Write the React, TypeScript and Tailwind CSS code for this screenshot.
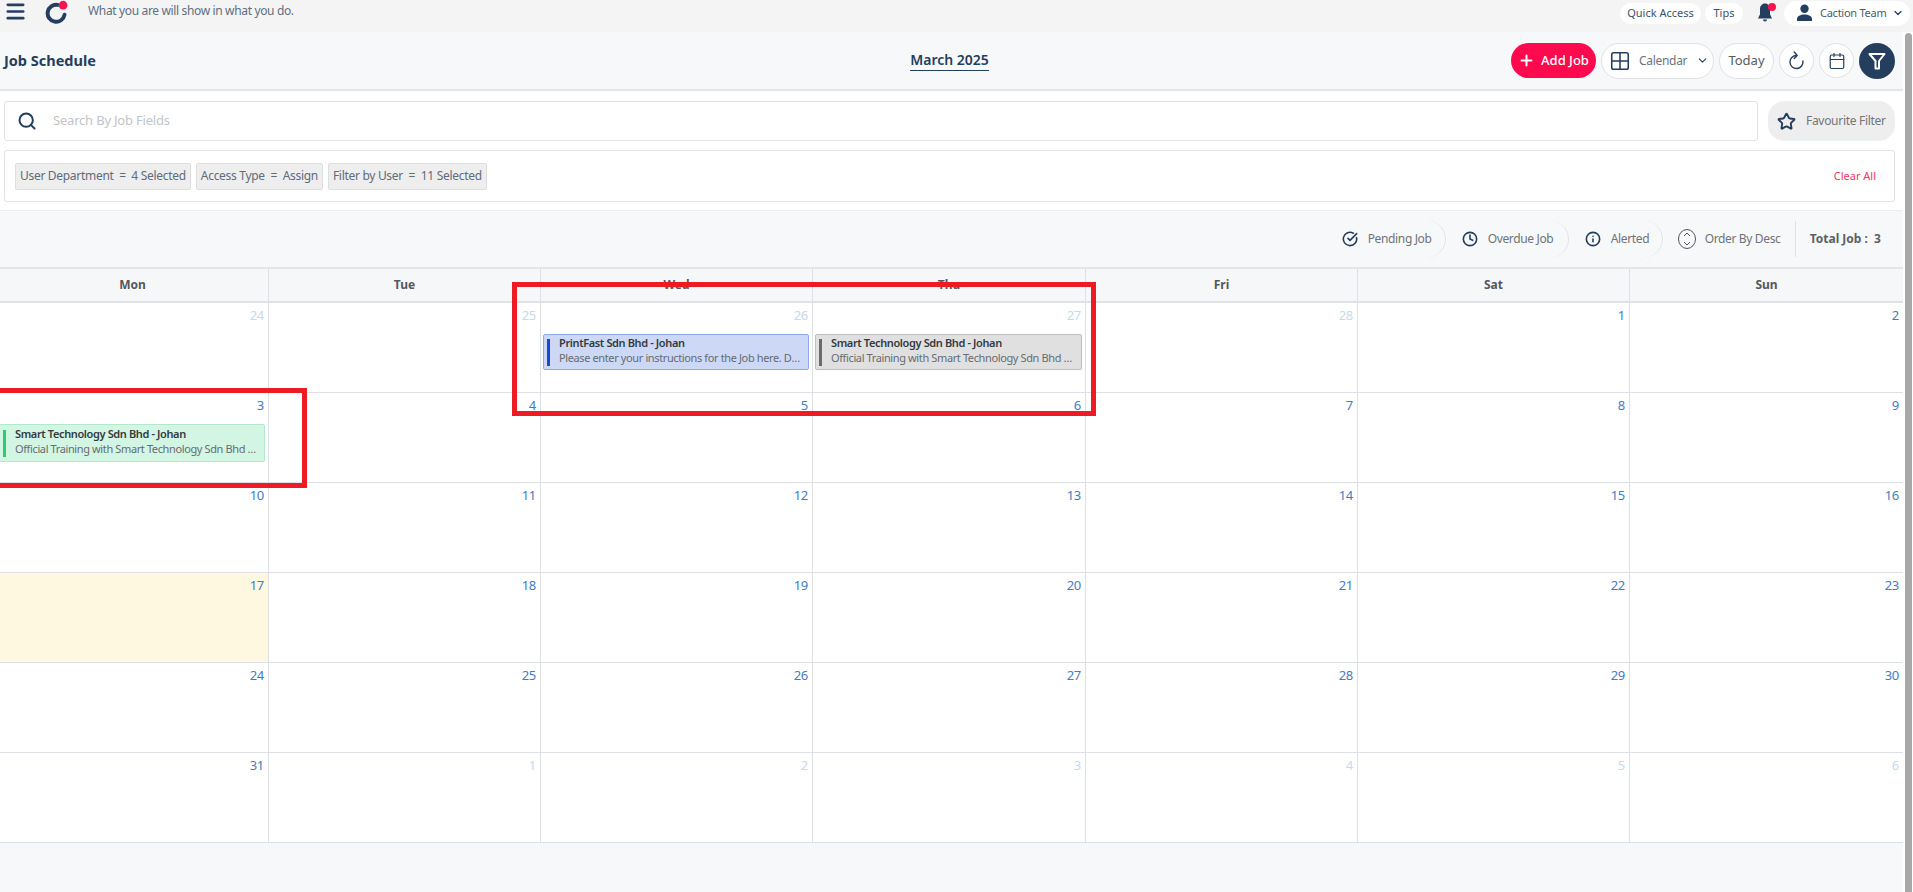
import { Calendar, ChevronDown, CircleCheckBig, Clock, Grid2x2, Info, Menu, Plus, Search, Star } from 'lucide-react'
import type { ReactNode } from 'react'

type CalEvent = { title: string; desc: string; box: string; bar: string }

type Cell = { day: number; muted?: boolean; today?: boolean; event?: CalEvent }

const training = 'Official Training with Smart Technology Sdn Bhd Zoom Session'

const greyEvent: CalEvent = {
  title: 'Smart Technology Sdn Bhd - Johan',
  desc: training,
  box: 'bg-[#e0e0e0] border-[#bdbdbd] h-[36px]',
  bar: 'bg-[#6b6b6b]',
}

const blueEvent: CalEvent = {
  title: 'PrintFast Sdn Bhd - Johan',
  desc: 'Please enter your instructions for the Job here. Details to follow',
  box: 'bg-[#ccd8f6] border-[#8fa8ee] h-[36px]',
  bar: 'bg-[#1a47d8]',
}

const greenEvent: CalEvent = {
  title: 'Smart Technology Sdn Bhd - Johan',
  desc: training,
  box: 'bg-[#d3f5e3] border-[#b4e8cb] h-[38px]',
  bar: 'bg-[#2ecc71]',
}

const weeks: Cell[][] = [
  [
    { day: 24, muted: true },
    { day: 25, muted: true },
    { day: 26, muted: true, event: blueEvent },
    { day: 27, muted: true, event: greyEvent },
    { day: 28, muted: true },
    { day: 1 },
    { day: 2 },
  ],
  [{ day: 3, event: greenEvent }, { day: 4 }, { day: 5 }, { day: 6 }, { day: 7 }, { day: 8 }, { day: 9 }],
  [{ day: 10 }, { day: 11 }, { day: 12 }, { day: 13 }, { day: 14 }, { day: 15 }, { day: 16 }],
  [{ day: 17, today: true }, { day: 18 }, { day: 19 }, { day: 20 }, { day: 21 }, { day: 22 }, { day: 23 }],
  [{ day: 24 }, { day: 25 }, { day: 26 }, { day: 27 }, { day: 28 }, { day: 29 }, { day: 30 }],
  [
    { day: 31 },
    { day: 1, muted: true },
    { day: 2, muted: true },
    { day: 3, muted: true },
    { day: 4, muted: true },
    { day: 5, muted: true },
    { day: 6, muted: true },
  ],
]

const dayNames = ['Mon', 'Tue', 'Wed', 'Thu', 'Fri', 'Sat', 'Sun']

const chips = ['User Department  =  4 Selected', 'Access Type  =  Assign', 'Filter by User  =  11 Selected']

const weekGrid = 'grid grid-cols-[272px_272px_272px_273px_272px_272px_274px]'

function Logo() {
  return (
    <svg width="24" height="24" viewBox="0 0 22 22" fill="none">
      <path d="M12.500 4.500A7.800 7.800 0 1 0 18.800 13.500" stroke="#243e5e" strokeWidth="3.600" strokeLinecap="round" />
      <circle cx="17.500" cy="4.800" r="4" fill="#f5164f" />
    </svg>
  )
}

function IconCircle({ children }: { children: ReactNode }) {
  return (
    <button className="w-[35px] h-[35px] rounded-full border border-[#dfe1e4] bg-white flex items-center justify-center text-[#243e5e]">
      {children}
    </button>
  )
}

function ToolItem({ icon, label, width }: { icon: ReactNode; label: string; width: string }) {
  return (
    <div className={`h-[36px] flex items-center gap-[10px] border-r border-[#e1e3e7] rounded-r-[20px] ${width}`}>
      {icon}
      <span className="text-[12px] tracking-[-0.35px] text-[#6f7378]">{label}</span>
    </div>
  )
}

function DayCell({ cell }: { cell: Cell }) {
  return (
    <div className={`h-[90px] border-r border-b border-[#dde0e6] pl-[2px] pr-[3px] ${cell.today ? 'bg-[#fff8e1]' : 'bg-white'}`}>
      <div
        className={`h-[31px] pt-[3px] pr-[1px] text-right text-[13px] leading-[18px] tracking-[-0.3px] ${cell.muted ? 'text-[#c6d9ee]' : 'text-[#3f7cc4]'}`}
      >
        {cell.day}
      </div>
      {cell.event && (
        <div className={`flex items-center gap-[9px] rounded-[2px] border px-[3px] ${cell.event.box}`}>
          <div className={`w-[3px] h-[27px] shrink-0 ${cell.event.bar}`} />
          <div className="min-w-0 pb-[3px] tracking-[-0.38px]">
            <div className="text-[11px] leading-[15px] font-semibold text-[#333a40] truncate">{cell.event.title}</div>
            <div className="text-[11px] leading-[16px] text-[#666c72] truncate">{cell.event.desc}</div>
          </div>
        </div>
      )}
    </div>
  )
}

export default function App() {
  return (
    <div className="relative w-[1913px] h-[892px] overflow-hidden bg-white font-['Noto_Sans',sans-serif]">
      {/* Top bar */}
      <div className="h-[32px] bg-[#f4f4f4] flex items-center pl-[4px] pr-[3px]">
        <Menu size={23} strokeWidth={2.800} className="mb-[10px] text-[#243e5e]" />
        <div className="ml-[17px] mb-[9px]">
          <Logo />
        </div>
        <span className="ml-[20px] mb-[11px] text-[12px] tracking-[-0.35px] text-[#5f6f80]">What you are will show in what you do.</span>
        <div className="ml-auto flex items-center h-full pb-[6px]">
          <div className="h-[21px] w-[81px] rounded-full bg-white flex items-center justify-center text-[11px] text-[#3d4f63]">
            Quick Access
          </div>
          <div className="ml-[4px] h-[21px] w-[38px] rounded-full bg-white flex items-center justify-center text-[11px] text-[#3d4f63]">
            Tips
          </div>
          <div className="relative ml-[12px] w-[20px] h-[20px]">
            <svg width="20" height="20" viewBox="0 0 20 20" fill="#243e5e">
              <path d="M10 0.500c-3.200 0-5 2.600-5 5.400v5.400L3 15.500h14l-2-4.200V5.900c0-2.800-1.800-5.400-5-5.400z" />
              <path d="M8 16.500h4a2 2 0 0 1-4 0z" />
            </svg>
            <span className="absolute top-[0px] right-[-1px] w-[8px] h-[8px] rounded-full bg-[#f5164f]" />
          </div>
          <div className="ml-[9px] h-[25px] w-[126px] rounded-full bg-white flex items-center pl-[12px]">
            <svg width="17" height="18" viewBox="0 0 17 18" fill="#243e5e">
              <circle cx="8.500" cy="4.800" r="4.200" />
              <path d="M1 17v-2c0-3 3.500-4.500 7.500-4.500S16 12 16 15v2z" />
            </svg>
            <span className="ml-[7px] text-[11px] tracking-[-0.25px] text-[#4a5b6e]">Caction Team</span>
            <ChevronDown size={12} strokeWidth={2.500} className="ml-[5px] text-[#243e5e]" />
          </div>
        </div>
      </div>

      <div className="flex h-[860px]">
        <div className="w-[1903px] shrink-0 bg-[#f7f8fa] flex flex-col">
          {/* Page header */}
          <div className="h-[59px] border-b-2 border-[#e3e5e8] pl-[4px] pr-[8px] grid grid-cols-[1fr_auto_1fr] items-center">
            <div className="text-[14.500px] font-bold text-[#243e5e]">Job Schedule</div>
            <div className="mb-[2px] text-[14px] font-semibold text-[#243e5e] border-b border-[#243e5e]">March 2025</div>
            <div className="flex items-center justify-end gap-[5px]">
              <button className="w-[85px] h-[35px] rounded-full bg-[#ff0a4f] text-white flex items-center justify-center gap-[6px] text-[13px] font-medium">
                <Plus size={17} strokeWidth={2.800} />
                Add Job
              </button>
              <button className="w-[113px] h-[36px] rounded-full border border-[#dfe1e4] bg-white flex items-center pl-[7px] text-[#243e5e]">
                <Grid2x2 size={22} strokeWidth={1.700} />
                <span className="ml-[8px] text-[12px] tracking-[-0.3px] text-[#6f7378]">Calendar</span>
                <ChevronDown size={13} className="ml-[9px]" />
              </button>
              <button className="w-[55px] h-[36px] rounded-full border border-[#dfe1e4] bg-white text-[13px] text-[#555b60]">
                Today
              </button>
              <IconCircle>
                <svg width="15" height="19" viewBox="0 0 15 19" fill="none" stroke="currentColor" strokeWidth="1.400" strokeLinecap="round" strokeLinejoin="round">
                  <path d="M7.500 4.500A6.500 6.500 0 1 0 13.900 10" />
                  <path d="M5.200 1l3 3.500-3 3" />
                </svg>
              </IconCircle>
              <IconCircle>
                <Calendar size={18} strokeWidth={1.600} />
              </IconCircle>
              <button className="w-[36px] h-[36px] rounded-full bg-[#243e5e] flex items-center justify-center text-white">
                <svg width="18" height="18" viewBox="0 0 18 18" fill="none" stroke="currentColor" strokeWidth="2" strokeLinejoin="round">
                  <path d="M1.500 2h15l-5.500 7v7.500H7.500V9z" />
                </svg>
              </button>
            </div>
          </div>

          {/* Search and filters */}
          <div className="h-[120px] bg-white border-b border-[#eceef1] pl-[4px] pr-[8px] pt-[10px]">
            <div className="flex gap-[10px]">
              <div className="flex-1 h-[40px] rounded-[3px] border border-[#e0e2e5] flex items-center pl-[12px]">
                <Search size={20} strokeWidth={2.400} className="text-[#243e5e]" />
                <span className="ml-[16px] text-[13px] tracking-[-0.2px] text-[#c2c4c7]">Search By Job Fields</span>
              </div>
              <div className="w-[127px] h-[40px] rounded-[16px] bg-[#eeeeee] border border-[#e8f0f8] flex items-center pl-[8px]">
                <Star size={19} strokeWidth={2.400} className="text-[#243e5e]" />
                <span className="ml-[10px] text-[12px] tracking-[-0.3px] text-[#71757a] whitespace-nowrap">Favourite Filter</span>
              </div>
            </div>
            <div className="mt-[9px] h-[52px] rounded-[3px] border border-[#e0e2e5] flex items-center pl-[10px] pr-[18px] gap-[5px]">
              {chips.map((chip) => (
                <div
                  key={chip}
                  className="h-[27px] px-[4px] rounded-[2px] bg-[#eeeeee] border border-[#dedede] flex items-center text-[12px] tracking-[-0.3px] text-[#5f6c7a] whitespace-pre"
                >
                  {chip}
                </div>
              ))}
              <span className="ml-auto text-[11px] text-[#f0356b]">Clear All</span>
            </div>
          </div>

          {/* Job toolbar */}
          <div className="h-[56px] flex items-start justify-end pt-[10px] pr-[22px]">
            <ToolItem icon={<CircleCheckBig size={16} strokeWidth={2.400} className="text-[#243e5e]" />} label="Pending Job" width="w-[104px]" />
            <div className="w-[16px]" />
            <ToolItem icon={<Clock size={16} strokeWidth={2.400} className="text-[#243e5e]" />} label="Overdue Job" width="w-[107px]" />
            <div className="w-[16px]" />
            <ToolItem icon={<Info size={16} strokeWidth={2.400} className="text-[#243e5e]" />} label="Alerted" width="w-[78px]" />
            <div className="w-[15px]" />
            <div className="h-[36px] w-[118px] flex items-center gap-[9px] border-r border-[#dfe1e4]">
              <svg width="18" height="20" viewBox="0 0 18 20" fill="none" stroke="#50565c" strokeWidth="1">
                <ellipse cx="9" cy="10" rx="8.500" ry="9.500" />
                <path d="M6 7l3-3 3 3M6 13l3 3 3-3" />
              </svg>
              <span className="text-[12px] tracking-[-0.35px] text-[#6f7378] whitespace-nowrap">Order By Desc</span>
            </div>
            <div className="ml-[14px] h-[36px] flex items-center text-[12px] font-bold text-[#5c6064] whitespace-pre">
              Total Job :  3
            </div>
          </div>

          {/* Calendar */}
          <div className="w-[1907px] -ml-[3px] border-t-2 border-[#e3e5e8]">
            <div className={`${weekGrid} h-[34px] bg-[#f6f7f8] border-b-2 border-[#dfe1e6]`}>
              {dayNames.map((name) => (
                <div key={name} className="border-r border-[#dde0e6] flex items-center justify-center text-[12px] font-bold text-[#54585d]">
                  {name}
                </div>
              ))}
            </div>
            {weeks.map((week, i) => (
              <div key={i} className={weekGrid}>
                {week.map((cell, j) => (
                  <DayCell key={j} cell={cell} />
                ))}
              </div>
            ))}
          </div>
        </div>

        {/* Scrollbar */}
        <div className="flex-1 bg-white pt-[1px] pl-[2px] pr-[1px]">
          <div className="h-full rounded-t-[4px] bg-[#a8a8a8]" />
        </div>
      </div>

      {/* Annotation boxes */}
      <div className="absolute left-[512px] top-[282px] w-[584px] h-[134px] border-[5px] border-[#ed1c24]" />
      <div className="absolute left-[-5px] top-[388px] w-[312px] h-[100px] border-[5px] border-[#ed1c24]" />
    </div>
  )
}
